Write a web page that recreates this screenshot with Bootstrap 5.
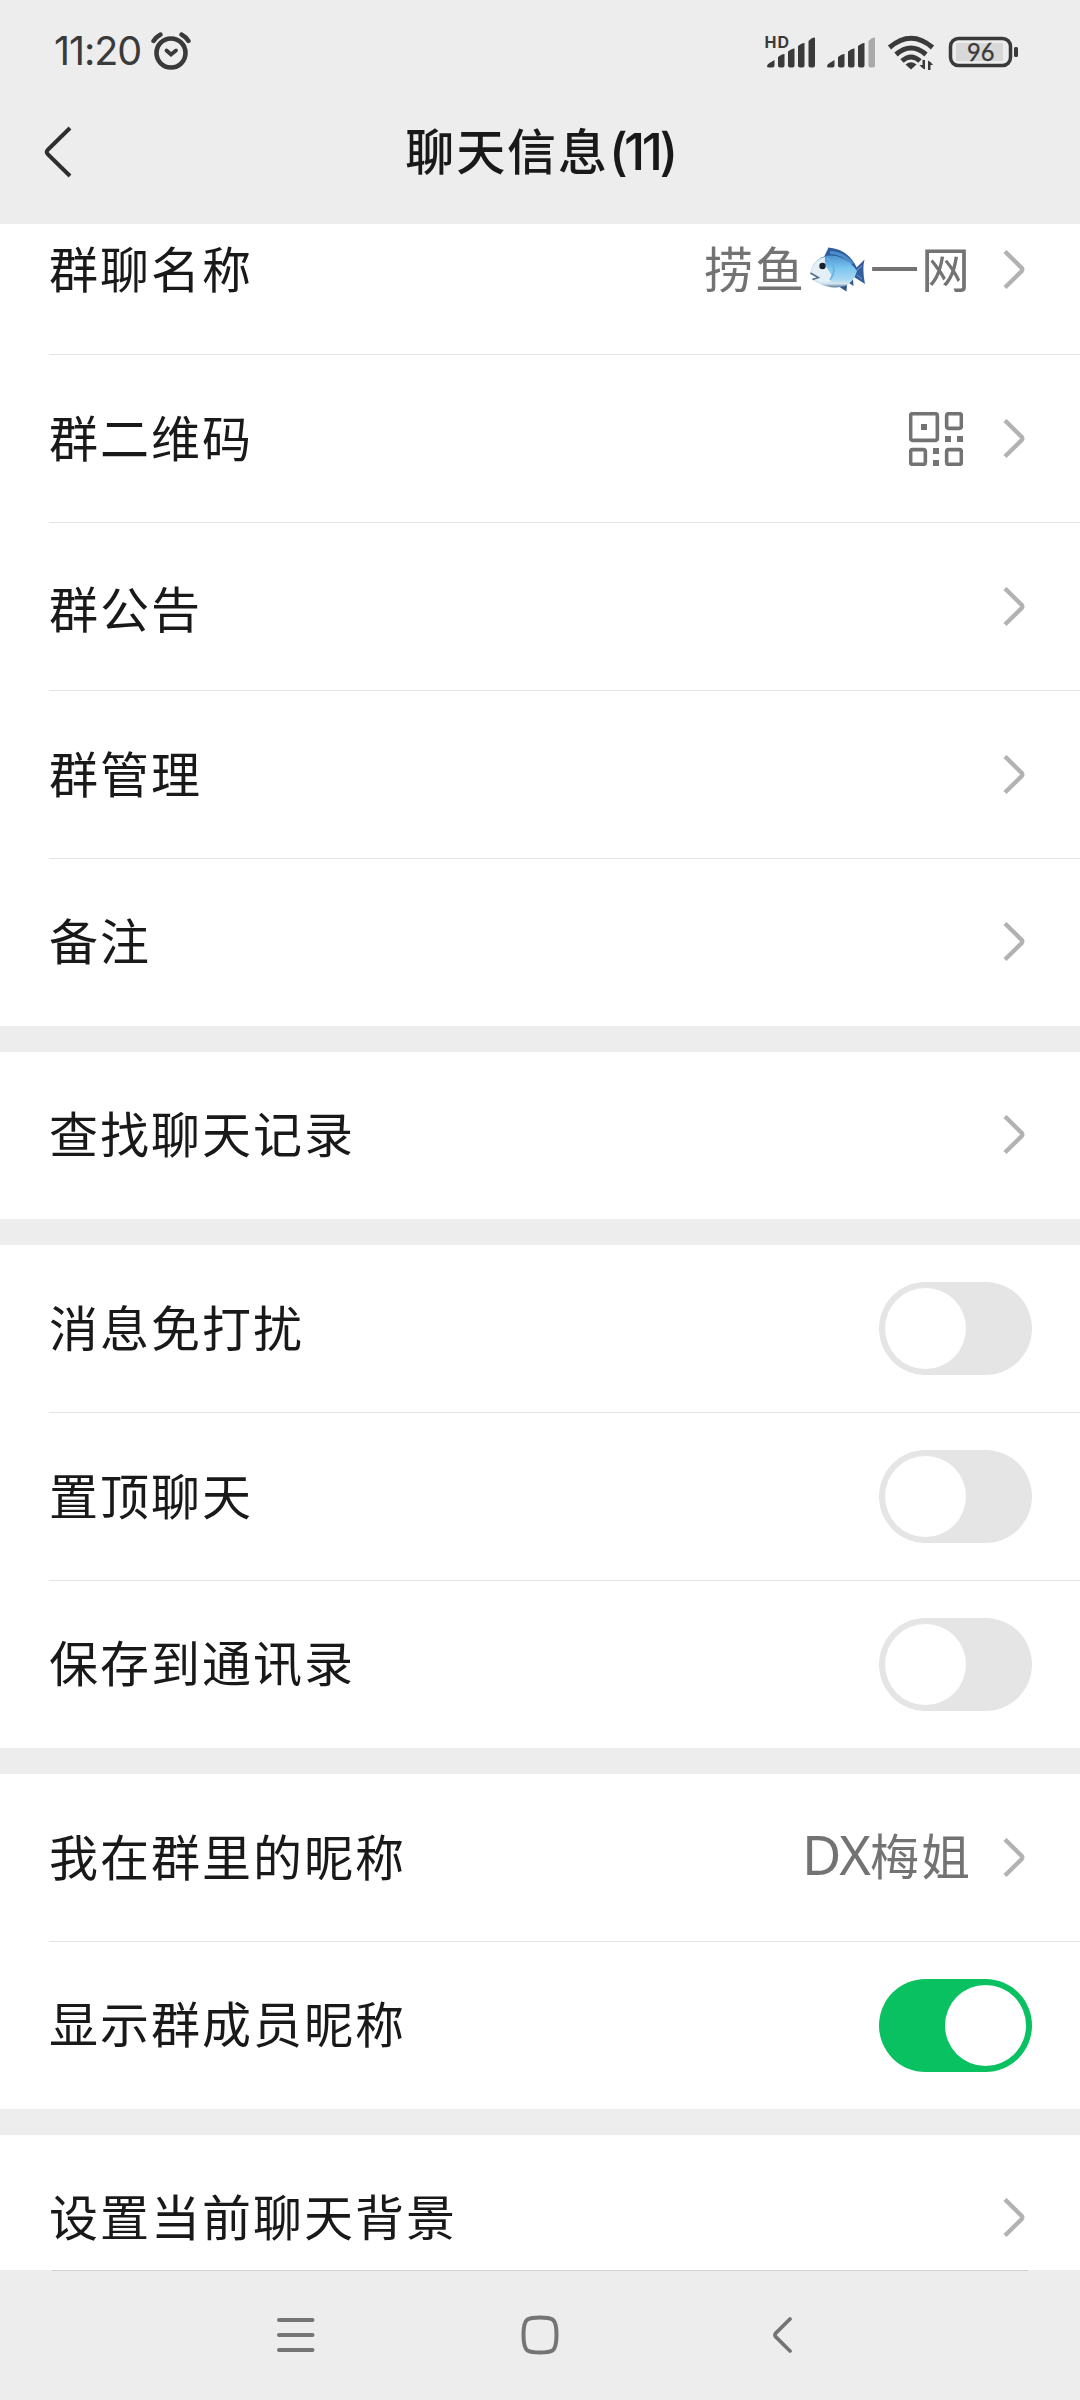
<!DOCTYPE html>
<html lang="zh-CN">
<head>
<meta charset="utf-8">
<meta name="viewport" content="width=device-width, initial-scale=1">
<title>聊天信息</title>
<link href="https://cdn.jsdelivr.net/npm/bootstrap@5.3.0/dist/css/bootstrap.min.css" rel="stylesheet">
<style>
body{font-family:"Noto Sans CJK SC",sans-serif;background:#ededed;color:#191919;width:1080px;height:2400px;overflow:hidden}
svg{display:block;flex:none}
.statusbar{height:104px;padding:0 61px 0 54px;color:#3a3a3a}
.clock{font:400 39.5px/1 Inter,sans-serif;letter-spacing:-1.1px}
.alarm{margin:0 0 2px 10px}
.titlebar{height:120px;padding:0 44px 24px}
.titlebar h1{font-size:49px;font-weight:500;letter-spacing:1.9px;line-height:1;padding-bottom:4px}
.titlebar .side{width:28px}
.paren{font-family:Inter,sans-serif;font-size:51px;letter-spacing:-3.6px}
.setting-group{background:#fff;margin-bottom:26px}
.setting{height:168px;padding:0 55px 0 0;margin-left:49px;border-bottom:1px solid #e5e5e5}
.setting:last-child{border-bottom-color:transparent;height:167px}
.setting.clipped{height:131px;padding-bottom:38px}
.setting.toggles{padding-right:48px}
.label-text{font-size:49px;letter-spacing:2px;line-height:1;white-space:nowrap;padding-bottom:7px}
.label-text.low{padding-bottom:1px}
.value-text{font-size:49px;letter-spacing:2px;line-height:1;color:#737373;margin-right:31px;padding-bottom:7px}
.fish{margin:7px 4px 0}
.qr{margin-right:40px}
.latin{font-family:"Noto Sans",sans-serif;font-size:54px;letter-spacing:-1px;line-height:1}
.toggle{width:153px;height:93px;padding:6px;background:#e5e5e5}
.toggle.on{background:#09c160}
.knob{width:81px;height:81px;background:#fff}
.navkeys{height:130px}
.keyrow{padding:44px 287px 0 277px}
.key-home{margin-left:206px;margin-right:214px}
.last-group{height:135px;overflow:hidden;margin-bottom:0}
.endline{height:1px;margin:0 52px;background:#d0d0d0}
</style>
</head>
<body>
<svg width="0" height="0" class="position-absolute">
<symbol id="chev" viewBox="0 0 22 40"><path d="M2 1.500 18.500 17.700Q20 19.500 18.500 21.300L2 37.500" fill="none" stroke="#b2b2b2" stroke-width="4.400"/></symbol>
</svg>

<header>
<div class="statusbar d-flex align-items-center justify-content-between">
  <div class="d-flex align-items-center">
    <span class="clock">11:20</span>
    <svg width="40" height="38" viewBox="0 0 40 38" class="alarm" fill="none" stroke="#3a3a3a" stroke-linecap="round"><circle cx="20" cy="21" r="14.500" stroke-width="4.600"/><path d="m15.500 18.500 4.500 4 5-4" stroke-width="3.800"/><path d="M2.500 9Q5 5 9.500 2.500M30.500 2.500Q35 5 37.500 9" stroke-width="4.400"/></svg>
  </div>
  <svg width="254" height="40" viewBox="765 32 254 40" fill="#3a3a3a">
    <text x="764.500" y="48" font-family="Inter" font-weight="700" font-size="16" textLength="24.500">HD</text>
    <path id="sig" d="M767 66.500q0-2.500 2.500-3.500l5-3v5.500q0 2-2 2h-3.500q-2 0-2-1zM778 57l3-2q3-1.500 3.500-1v11.500q0 2-2 2h-2.500q-2 0-2-2zM788 51.500l3-2q3-1.500 3.500-1v17q0 2-2 2h-2.500q-2 0-2-2zM798 46l3-2q3-1.500 3.500-1v22.500q0 2-2 2h-2.500q-2 0-2-2z"/>
    <path d="M808.500 41l3-2.500q3-1.500 3.500-.5v27.500q0 2-2 2h-2.500q-2 0-2-2z"/>
    <use href="#sig" x="60"/>
    <path d="M868.500 41l3-2.500q3-1.500 3.500-.5v27.500q0 2-2 2h-2.500q-2 0-2-2z" fill="#aaa"/>
    <g fill="none" stroke="#3a3a3a" stroke-width="5"><path d="M889.500 47.500Q911 29 932.500 47.500M896 54.500Q911 41.500 926 54.500M902 61Q911 53 920 61"/></g>
    <path d="M905.500 64.500Q911 60 916.500 64.500L911 69.500z"/>
    <path d="M925 60v9.500q-3-1-5.500-4.500h3v-5zM928 70v-9.500q3 1 5 4.500h-2.500v5z"/>
    <rect x="950.500" y="38.500" width="60" height="27" rx="8" fill="none" stroke="#3a3a3a" stroke-width="3.500"/>
    <rect x="956" y="43" width="47" height="18" fill="#d8d8d8"/>
    <rect x="1014" y="47" width="4" height="10" rx="1.500"/>
    <text x="967" y="61" font-family="Lato" font-size="24.500" textLength="27.500" lengthAdjust="spacingAndGlyphs" stroke="#3a3a3a" stroke-width=".3">96</text>
  </svg>
</div>
<div class="titlebar d-flex align-items-center justify-content-between">
  <svg class="side" width="28" height="52" viewBox="0 0 28 52"><path d="M26 2 3.500 24.200Q2 26 3.500 27.800L26 50" fill="none" stroke="#2e2e2e" stroke-width="4"/></svg>
  <h1 class="mb-0">聊天信息<span class="paren">(11)</span></h1>
  <span class="side"></span>
</div>
</header>

<main>
<section class="setting-group">
  <div class="setting clipped d-flex align-items-center"><span class="label-text me-auto">群聊名称</span>
    <span class="value-text d-flex align-items-center">捞鱼<svg width="56" height="46" viewBox="0 0 56 46" class="fish">
      <defs><linearGradient id="fb" x1="0" y1="0" x2="0" y2="1"><stop offset="0" stop-color="#4d93d0"/><stop offset=".4" stop-color="#7cc6f0"/><stop offset=".75" stop-color="#a9d8f2"/><stop offset=".88" stop-color="#d5e6ee"/><stop offset="1" stop-color="#50759c"/></linearGradient></defs>
      <path d="M14 10 18.500.5Q38 2 47 21L42 25 17 12z" fill="#2f5d9c"/><path d="M20 5.500Q34 6 42 17" fill="none" stroke="#4f8fce" stroke-width="3"/>
      <path d="M44 23 54.500 12.500Q52 22 55 37L44 30z" fill="#345f9c"/><path d="m46 24 6-5m-5 9 5 4" stroke="#6f9fce"/>
      <path d="M28 39 36.500 44.500 37 37zM39 36l4.500 3-.5-7z" fill="#305789"/>
      <path d="M.5 25C4 10 18 5 32 11Q41 15 47 24 44 35 35 39 22 43 8 36L1 31.500 7 31 .5 27z" fill="url(#fb)"/>
      <path d="M.5 25Q4 12 15 10 14 18 19 24 24 31 20 35 11 37 2 32L8 31 .5 27z" fill="#e5eff6"/><path d="M17 11Q29 20 20 33" fill="none" stroke="#62b1e2" stroke-width="1.500"/><path d="m.5 26 8 4.500-6 2" fill="none" stroke="#536f88" stroke-width="1.500"/><circle cx="12.500" cy="19" r="3.200" fill="#17202b"/></svg>一网</span>
    <svg width="22" height="40"><use href="#chev"/></svg></div>
  <div class="setting d-flex align-items-center"><span class="label-text me-auto">群二维码</span>
    <svg width="54" height="54" viewBox="0 0 54 54" class="qr" fill="none" stroke="#737373" stroke-width="3.600"><rect x="1.650" y="1.650" width="26.700" height="26.700" rx="2"/><rect x="37.650" y="1.650" width="14.700" height="14.700" rx="2"/><rect x="1.650" y="37.650" width="14.700" height="14.700" rx="2"/><rect x="37.650" y="37.650" width="14.700" height="14.700" rx="2"/><path d="M12 12h6v6h-6zM36 24h6v6h-6zM48 24h6v6h-6zM24 36h6v6h-6zM24 48h6v6h-6z" fill="#737373" stroke="none"/></svg>
    <svg width="22" height="40"><use href="#chev"/></svg></div>
  <div class="setting d-flex align-items-center"><span class="label-text low me-auto">群公告</span><svg width="22" height="40"><use href="#chev"/></svg></div>
  <div class="setting d-flex align-items-center"><span class="label-text me-auto">群管理</span><svg width="22" height="40"><use href="#chev"/></svg></div>
  <div class="setting d-flex align-items-center"><span class="label-text me-auto">备注</span><svg width="22" height="40"><use href="#chev"/></svg></div>
</section>
<section class="setting-group">
  <div class="setting d-flex align-items-center"><span class="label-text me-auto">查找聊天记录</span><svg width="22" height="40"><use href="#chev"/></svg></div>
</section>
<section class="setting-group">
  <div class="setting toggles d-flex align-items-center"><span class="label-text me-auto">消息免打扰</span><span class="toggle rounded-pill d-flex"><span class="knob rounded-circle"></span></span></div>
  <div class="setting toggles d-flex align-items-center"><span class="label-text me-auto">置顶聊天</span><span class="toggle rounded-pill d-flex"><span class="knob rounded-circle"></span></span></div>
  <div class="setting toggles d-flex align-items-center"><span class="label-text me-auto">保存到通讯录</span><span class="toggle rounded-pill d-flex"><span class="knob rounded-circle"></span></span></div>
</section>
<section class="setting-group">
  <div class="setting d-flex align-items-center"><span class="label-text me-auto">我在群里的昵称</span><span class="value-text"><span class="latin">DX</span>梅姐</span><svg width="22" height="40"><use href="#chev"/></svg></div>
  <div class="setting toggles d-flex align-items-center"><span class="label-text me-auto">显示群成员昵称</span><span class="toggle on rounded-pill d-flex justify-content-end"><span class="knob rounded-circle"></span></span></div>
</section>
<section class="setting-group last-group">
  <div class="setting d-flex align-items-center"><span class="label-text me-auto">设置当前聊天背景</span><svg width="22" height="40"><use href="#chev"/></svg></div>
</section>
</main>
<footer class="navkeys">
  <div class="endline"></div>
  <div class="keyrow d-flex align-items-center">
    <svg width="38" height="40" viewBox="0 0 38 40" stroke="#757575" stroke-width="4" stroke-linecap="round"><path d="M2 5h33.500M2 20h33.500M2 35h33.500"/></svg>
    <svg class="key-home" width="38" height="40" viewBox="0 0 38 40"><path d="M19 2.500Q28 2.500 31.500 4.500Q35.500 7 35.500 20Q35.500 33 31.500 35.500Q28 37.500 19 37.500Q10 37.500 6.500 35.500Q2.500 33 2.500 20Q2.500 7 6.500 4.500Q10 2.500 19 2.500z" fill="none" stroke="#757575" stroke-width="4"/></svg>
    <svg width="20" height="40" viewBox="0 0 20 40"><path d="M17 4 2.500 18.500Q1.500 20 2.500 21.500L17 36" fill="none" stroke="#757575" stroke-width="3.800" stroke-linecap="round"/></svg>
  </div>
</footer>
<script src="https://cdn.jsdelivr.net/npm/bootstrap@5.3.0/dist/js/bootstrap.bundle.min.js"></script>
</body>
</html>
